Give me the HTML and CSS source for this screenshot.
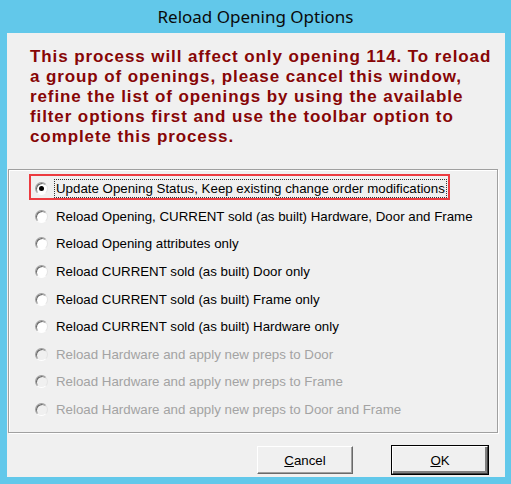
FILE: index.html
```html
<!doctype html>
<html lang="en">
<head>
	<meta charset="utf-8">
	<title>Reload Opening Options</title>
	<link rel="stylesheet" href="styles.css">
</head>
<body>
	<div class="window">
		<div class="caption">Reload Opening Options</div>
		<div class="client">
			<p class="warning">This process will affect only opening 114. To reload<br>
				a group of openings, please cancel this window,<br>
				refine the list of openings by using the available<br>
				filter options first and use the toolbar option to<br>
				complete this process.</p>

			<div class="group">
				<label class="option selected">
					<span class="radio checked"></span>
					<span class="focus">Update Opening Status, Keep existing change order modifications</span>
				</label>
				<label class="option">
					<span class="radio"></span>
					<span>Reload Opening, CURRENT sold (as built) Hardware, Door and Frame</span>
				</label>
				<label class="option">
					<span class="radio"></span>
					<span>Reload Opening attributes only</span>
				</label>
				<label class="option">
					<span class="radio"></span>
					<span>Reload CURRENT sold (as built) Door only</span>
				</label>
				<label class="option">
					<span class="radio"></span>
					<span>Reload CURRENT sold (as built) Frame only</span>
				</label>
				<label class="option">
					<span class="radio"></span>
					<span>Reload CURRENT sold (as built) Hardware only</span>
				</label>
				<label class="option disabled">
					<span class="radio"></span>
					<span>Reload Hardware and apply new preps to Door</span>
				</label>
				<label class="option disabled">
					<span class="radio"></span>
					<span>Reload Hardware and apply new preps to Frame</span>
				</label>
				<label class="option disabled">
					<span class="radio"></span>
					<span>Reload Hardware and apply new preps to Door and Frame</span>
				</label>
			</div>

			<div class="buttons">
				<button class="btn"><u>C</u>ancel</button>
				<button class="btn default"><u>O</u>K</button>
			</div>
		</div>
	</div>
</body>
</html>
```

FILE: styles.css
```css
body {
	margin: 0;
	background-color: #62c8ea;
}

.window {
	width: 511px;
	height: 484px;
	display: flex;
	flex-direction: column;
}

.caption {
	height: 33px;
	line-height: 33px;
	text-align: center;
	font-family: "Noto Sans", sans-serif;
	font-size: 17px;
	color: #0a0a0a;
}

/* рабочая область окна */
.client {
	margin: 0 6px 7px 7px;
	height: 444px;
	background-color: #f0f0f0;
	position: relative;
}

.warning {
	margin: 0;
	padding: 14px 0 0 23px;
	height: 124px;
	box-sizing: border-box;
	font-family: "Liberation Sans", Arial, sans-serif;
	font-weight: bold;
	font-size: 17px;
	letter-spacing: 0.9px;
	line-height: 20px;
	color: #870606;
	white-space: nowrap;
}

.group {
	margin-left: 1px;
	margin-top: 12px;
	width: 490px;
	height: 264px;
	border: 1px solid #a0a0a0;
	box-shadow: inset 1px 1px #fff, 1px 1px #fff;
	box-sizing: border-box;
	padding-top: 5px;
}

.option {
	display: flex;
	align-items: center;
	height: 27.6px;
	padding-left: 26px;
	font-family: "Liberation Sans", Arial, sans-serif;
	font-size: 13.3px;
	color: #000;
	position: relative;
}

.option.selected::before {
	content: "";
	position: absolute;
	left: 20px;
	top: -1px;
	width: 417px;
	height: 22px;
	border: 2px solid #ec3b40;
}

.focus {
	outline: 1px dotted #333;
	outline-offset: 1px;
}

.option.disabled {
	color: #a3a3a3;
}

.radio {
	width: 13px;
	height: 13px;
	border-radius: 50%;
	margin-right: 8px;
	background: #fff;
	border: 1px solid;
	border-color: #a0a0a0 #e3e3e3 #fff #a0a0a0;
	box-sizing: border-box;
	box-shadow: inset 1px 1px #696969;
	position: relative;
	flex-shrink: 0;
}

.disabled .radio {
	background: #f0f0f0;
}

.radio.checked::after {
	content: "";
	position: absolute;
	left: 3px;
	top: 3px;
	width: 5px;
	height: 5px;
	border-radius: 50%;
	background: #000;
}

.buttons {
	display: flex;
	gap: 39px;
	padding: 13px 0 0 250px;
}

.btn {
	width: 96px;
	height: 28px;
	background: #f0f0f0;
	border: 1px solid;
	border-color: #fff #696969 #696969 #fff;
	box-shadow: inset -1px -1px #a0a0a0;
	font-family: "Liberation Sans", Arial, sans-serif;
	font-size: 13.3px;
	color: #000;
	padding: 0;
}

.btn.default {
	outline: 1px solid #000;
	border-color: #fff #404040 #404040 #fff;
	box-shadow: inset -2px -2px #808080;
}
```
